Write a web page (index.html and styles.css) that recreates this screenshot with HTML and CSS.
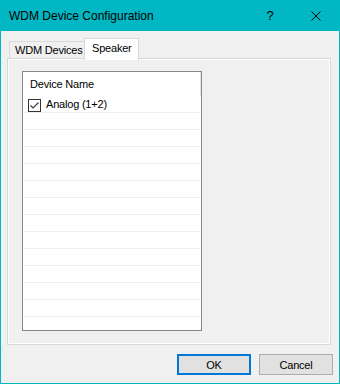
FILE: index.html
```html
<!DOCTYPE html>
<html lang="en">
<head>
    <meta charset="UTF-8">
    <title>WDM Device Configuration</title>
    <link rel="stylesheet" href="styles.css">
</head>
<body>
    <div class="window">
        <div class="titlebar">
            <span class="title">WDM Device Configuration</span>
            <span class="caption-btn help">?</span>
            <span class="caption-btn close">
                <svg width="10" height="10" viewBox="0 0 10 10">
                    <path d="M0.5 0.5 L9.5 9.5 M9.5 0.5 L0.5 9.5" stroke="#000" stroke-width="1" fill="none"/>
                </svg>
            </span>
        </div>
        <div class="content">
            <div class="tabs">
                <div class="tab">WDM Devices</div>
                <div class="tab active">Speaker</div>
            </div>
            <div class="panel">
                <div class="list">
                    <div class="list-header">Device Name</div>
                    <div class="list-row">
                        <span class="check">
                            <svg width="11" height="11" viewBox="0 0 11 11">
                                <path d="M1.5 5.5 L4 8 L9.5 2.5" stroke="#333" stroke-width="1.1" fill="none"/>
                            </svg>
                        </span>
                        Analog (1+2)
                    </div>
                    <div class="list-row"></div>
                    <div class="list-row"></div>
                    <div class="list-row"></div>
                    <div class="list-row"></div>
                    <div class="list-row"></div>
                    <div class="list-row"></div>
                    <div class="list-row"></div>
                    <div class="list-row"></div>
                    <div class="list-row"></div>
                    <div class="list-row"></div>
                    <div class="list-row"></div>
                    <div class="list-row"></div>
                </div>
            </div>
            <div class="buttons">
                <button class="btn default">OK</button>
                <button class="btn">Cancel</button>
            </div>
        </div>
    </div>
</body>
</html>
```

FILE: styles.css
```css
body {
    margin: 0;
    font-family: "Liberation Sans", Arial, sans-serif;
    font-size: 11px;
    letter-spacing: -0.2px;
    color: #000;
}
.window {
    width: 340px;
    height: 384px;
    box-sizing: border-box;
    background-color: #00b7c3;
    padding: 0 1px 1px 1px;
    display: flex;
    flex-direction: column;
}
.titlebar {
    height: 31px;
    display: flex;
    align-items: center;
    flex-shrink: 0;
    font-size: 12px;
    letter-spacing: 0;
}
.title {
    padding-left: 8px;
    flex: 1;
}
.caption-btn {
    width: 46px;
    height: 31px;
    display: flex;
    align-items: center;
    justify-content: center;
}
.help {
    font-size: 13px;
}
.content {
    flex: 1;
    background-color: #f0f0f0;
    padding: 7px 6px 0 6px;
    display: flex;
    flex-direction: column;
}
.tabs {
    display: flex;
    align-items: flex-end;
    height: 20px;
    margin-left: 2px;
}
.tab {
    position: relative;
    width: 76px;
    height: 17px;
    box-sizing: border-box;
    border: 1px solid #d9d9d9;
    border-bottom: none;
    padding-left: 5px;
    line-height: 17px;
    white-space: nowrap;
    background-color: #f0f0f0;
}
.tab.active {
    width: 55px;
    height: 22px;
    margin-bottom: -2px;
    margin-left: -1px;
    padding-left: 7px;
    line-height: 19px;
    background-color: #fff;
    z-index: 1;
}
.panel {
    height: 287px;
    box-sizing: border-box;
    margin-right: 2px;
    border: 1px solid #d9d9d9;
    box-shadow: inset 0 0 0 1px #fff;
    padding: 12px 0 0 14px;
}
.list {
    width: 180px;
    height: 260px;
    box-sizing: border-box;
    border: 1px solid #828790;
    background-color: #fff;
    overflow: hidden;
}
.list-header {
    height: 24px;
    line-height: 24px;
    padding-left: 7px;
    border-right: 1px solid #e5e5e5;
}
.list-row {
    height: 16px;
    line-height: 16px;
    margin: 0 1px;
    padding-left: 4px;
    border-bottom: 1px solid #f0f0f0;
    display: flex;
}
.check {
    width: 13px;
    height: 13px;
    box-sizing: border-box;
    border: 1px solid #333;
    margin: 3px 5px 0 0;
    display: flex;
}
.buttons {
    display: flex;
    justify-content: flex-end;
    gap: 8px;
    margin-top: 9px;
}
.btn {
    width: 74px;
    height: 21px;
    box-sizing: border-box;
    background-color: #e1e1e1;
    border: 1px solid #adadad;
    font-family: inherit;
    font-size: 11px;
    letter-spacing: inherit;
    padding: 0;
    color: #000;
}
.btn.default {
    border: 2px solid #0078d7;
}
```
